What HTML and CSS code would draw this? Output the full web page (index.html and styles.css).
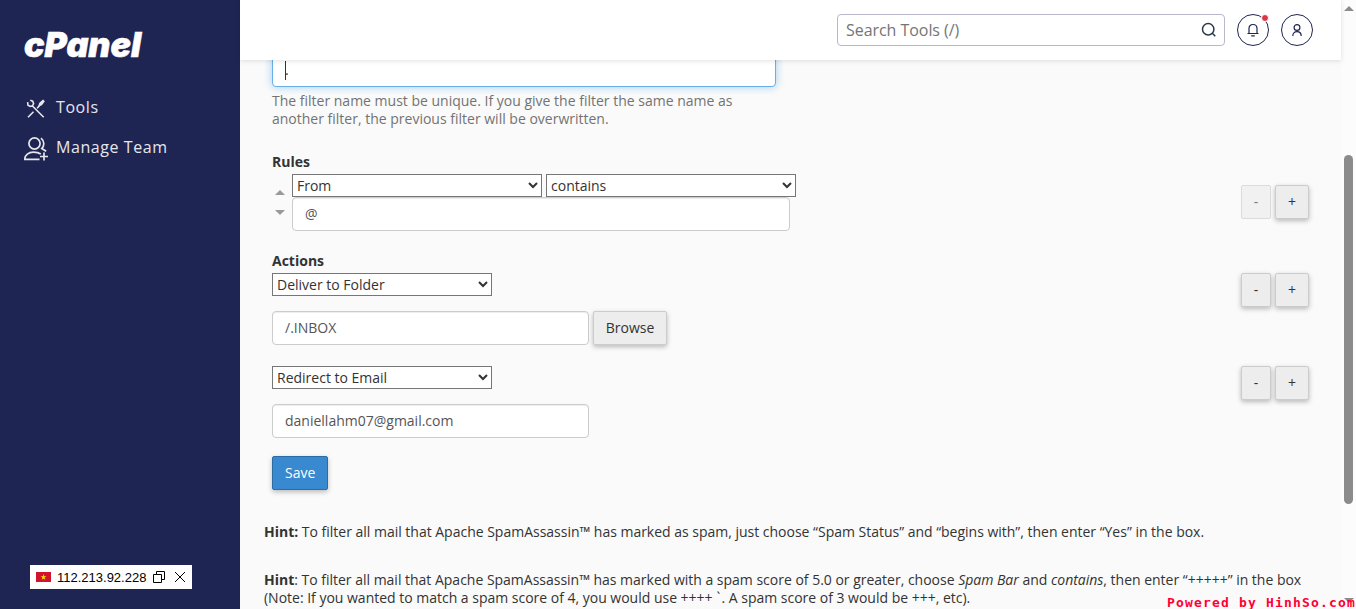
FILE: index.html
```
<!DOCTYPE html>
<html lang="en">
<head>
    <meta charset="UTF-8">
    <meta name="viewport" content="width=device-width, initial-scale=1.0">
    <title>cPanel - Email Filters</title>
    <link rel="stylesheet" href="styles.css">
</head>
<body>
    <div class="app">
        <nav class="sidebar">
            <svg class="logo" width="120" height="28" viewBox="0 0 120 28">
                <text x="0" y="26" textLength="117" lengthAdjust="spacingAndGlyphs">cPanel</text>
            </svg>
            <a class="nav-item">
                <svg width="24" height="24" viewBox="0 0 24 24" fill="none" stroke="#e6e6ea" stroke-width="1.600">
                    <path d="M3.600 5.200l.4 3 2.200 1.300 2.400-.8 1-2.300-.9-2.200-2.400-.9M8.200 8.700L19.700 20.300M4 20.300l5.500-5.500M13 11.200l2.500-2.500"/>
                    <path d="M15.200 8.500l.8-2.300 3-2.600.8.800-2.400 3.100z" fill="#e6e6ea"/>
                </svg>
                <span>Tools</span>
            </a>
            <a class="nav-item">
                <svg width="24" height="24" viewBox="0 0 24 24" fill="none" stroke="#e6e6ea" stroke-width="1.700">
                    <circle cx="10.500" cy="6.500" r="5.600"/>
                    <path d="M17 1.200c3.600 3 3.600 7.500.8 10.300l4.400 2.800M15.500 22.300H.8c0-4.500 4-7.100 8.500-7.100 3.500 0 6 .8 7.500 1.800M20 15.500v8M16 19.500h8"/>
                </svg>
                <span>Manage Team</span>
            </a>
            <div class="ip-box">
                <svg width="15" height="10" viewBox="0 0 15 10">
                    <rect width="15" height="10" fill="#d0142c"/>
                    <path d="M7.500 2l.7 2.200h2.300L8.600 5.500l.7 2.300-1.800-1.400-1.800 1.400.7-2.300-1.900-1.300h2.300z" fill="#ffde00"/>
                </svg>
                <span class="ip">112.213.92.228</span>
                <svg class="copy" width="12" height="12" viewBox="0 0 12 12" fill="none" stroke="#000">
                    <path d="M.5 3.500h8v8h-8zM3.500 3V.5h8v8H9"/>
                </svg>
                <svg width="12" height="12" viewBox="0 0 12 12" fill="none" stroke="#000">
                    <path d="M1 1l10 10M11 1L1 11"/>
                </svg>
            </div>
        </nav>

        <main class="main">
            <header class="header">
                <div class="search">
                    <input type="text" placeholder="Search Tools (/)">
                    <svg width="16" height="16" viewBox="0 0 16 16" fill="none" stroke="#293a4a" stroke-width="1.500">
                        <circle cx="7.200" cy="7.200" r="5.700"/>
                        <path d="M11.300 11.300l3 3"/>
                    </svg>
                </div>
                <button class="round">
                    <svg width="14" height="14" viewBox="0 0 14 14" fill="none" stroke="#1f2553" stroke-width="1.200">
                        <path d="M1.500 10.500h11M3 10.500V5.500C3 3 4.700 1.500 7 1.500s4 1.500 4 4v5M5.200 12.800h3.600"/>
                    </svg>
                    <span class="dot"></span>
                </button>
                <button class="round">
                    <svg width="14" height="14" viewBox="0 0 14 14" fill="none" stroke="#1f2553" stroke-width="1.200">
                        <circle cx="7" cy="4.500" r="2.900"/>
                        <path d="M2.800 13c0-2.800 1.600-4.300 4.200-4.300s4.200 1.500 4.200 4.300"/>
                    </svg>
                </button>
            </header>

            <div class="content">
                <form class="form">
                    <div class="filter-name"><span class="caret"></span>.</div>
                    <p class="help">The filter name must be unique. If you give the filter the same name as another filter, the previous filter will be overwritten.</p>

                    <label class="title">Rules</label>
                    <div class="row rule">
                        <div class="arrows">
                            <span class="up"></span>
                            <span class="down"></span>
                        </div>
                        <div class="fields">
                            <div class="selects">
                                <select class="wide"><option>From</option></select>
                                <select class="wide"><option>contains</option></select>
                            </div>
                            <input class="control rule-text" type="text" value="@">
                        </div>
                        <div class="buttons">
                            <button type="button" class="btn minus" disabled>-</button>
                            <button type="button" class="btn">+</button>
                        </div>
                    </div>

                    <label class="title actions-title">Actions</label>
                    <div class="row action">
                        <div class="fields">
                            <select><option>Deliver to Folder</option></select>
                            <div class="dest">
                                <input class="control" type="text" value="/.INBOX">
                                <button type="button" class="btn browse">Browse</button>
                            </div>
                        </div>
                        <div class="buttons">
                            <button type="button" class="btn minus">-</button>
                            <button type="button" class="btn">+</button>
                        </div>
                    </div>
                    <div class="row action">
                        <div class="fields">
                            <select><option>Redirect to Email</option></select>
                            <div class="dest">
                                <input class="control" type="text" value="daniellahm07@gmail.com">
                            </div>
                        </div>
                        <div class="buttons">
                            <button type="button" class="btn minus">-</button>
                            <button type="button" class="btn">+</button>
                        </div>
                    </div>

                    <button type="button" class="btn save">Save</button>
                </form>

                <p class="hint"><b>Hint:</b> To filter all mail that Apache SpamAssassin™ has marked as spam, just choose “Spam Status” and “begins with”, then enter “Yes” in the box.</p>
                <p class="hint"><b>Hint</b>: To filter all mail that Apache SpamAssassin™ has marked with a spam score of 5.0 or greater, choose <i>Spam Bar</i> and <i>contains</i>, then enter “+++++” in the box<br>(Note: If you wanted to match a spam score of 4, you would use ++++<span class="tick">`</span>. A spam score of 3 would be +++, etc).</p>
            </div>
        </main>

        <div class="scrollbar">
            <span class="up"></span>
            <div class="thumb"></div>
            <span class="down"></span>
        </div>
    </div>
    <div class="watermark">Powered by HinhSo.com</div>
</body>
</html>
```
FILE: styles.css
```
* { box-sizing: border-box; }
body { margin: 0; font-family: "Open Sans", sans-serif; font-size: 14px; line-height: 18px; color: #333; background-color: #fafafa; overflow: hidden; }
p { margin: 0; }
svg { display: block; flex: none; }
input, select, button { font-family: inherit; font-size: 14px; margin: 0; }

.app { display: flex; height: 609px; overflow: hidden; }

/* sidebar */
.sidebar { position: relative; width: 240px; padding: 31px 24px; background-color: #1f2553; flex: none; }
.logo { margin-bottom: 37px; overflow: visible; }
.logo text { font-family: Inter, sans-serif; font-weight: 900; font-style: italic; font-size: 34px; fill: #fff; stroke: #fff; stroke-width: 0.6px; }
.nav-item { display: flex; gap: 8px; height: 24px; margin-bottom: 16px; color: #e6e6ea; font-size: 16px; line-height: 22px; letter-spacing: 0.57px; }
.nav-item svg { margin-top: 1px; }
.ip-box { position: absolute; left: 30px; top: 565px; width: 162px; height: 24px; padding: 0 6px; display: flex; align-items: center; background-color: #fff; color: #000; font-family: "Liberation Sans", Arial, sans-serif; font-size: 13px; }
.ip { width: 89px; margin: 1px 7px 0 6px; }
.copy { margin-right: 9px; }

/* top bar */
.main { flex: 1; min-width: 0; }
.header { position: relative; z-index: 1; display: flex; align-items: center; justify-content: flex-end; gap: 12px; height: 60px; padding-right: 28px; background-color: #fff; box-shadow: 0 1px 5px rgba(0, 0, 0, 0.12); }
.search { display: flex; align-items: center; width: 388px; height: 32px; padding: 0 7px 0 8px; border: 1px solid #b9b8cb; border-radius: 4px; }
.search input { flex: 1; border: 0; padding: 0; font-size: 16px; letter-spacing: -0.05px; outline: none; }
.search input::placeholder { color: #757575; }
.round { position: relative; display: flex; align-items: center; justify-content: center; width: 32px; height: 32px; padding: 0; border: 1px solid #1f2553; border-radius: 50%; background-color: #fff; }
.dot { position: absolute; top: -1px; right: -1px; width: 8px; height: 8px; border: 1px solid #fff; border-radius: 50%; background-color: #dc3545; }

/* filter form */
.content { height: 549px; padding: 0 24px; overflow: hidden; }
.form { padding: 0 8px; }
.filter-name { display: flex; width: 504px; height: 34px; margin-top: -7px; padding: 7px 12px; border: 1px solid #66afe9; border-radius: 4px; background-color: #fff; box-shadow: 0 0 8px rgba(102, 175, 233, 0.6); }
.caret { width: 1px; height: 19px; margin-right: -1px; background-color: #333; }
.help { width: 490px; margin-top: 5px; color: #737373; }
.title { display: block; margin: 25px 0 3px; font-weight: 700; }
.actions-title { margin-top: 21px; }
.row { display: flex; }
.fields { flex: 1; }
select { display: block; width: 220px; height: 23px; color: #333; background-color: #fff; }
.selects { display: flex; gap: 4px; }
.wide { width: 250px; }
.control { display: block; width: 317px; height: 34px; padding: 5px 12px 7px; border: 1px solid #ccc; border-radius: 4px; color: #555; background-color: #fff; box-shadow: inset 0 1px 1px rgba(0, 0, 0, 0.075); }
.rule-text { width: 498px; }
.arrows { width: 20px; padding: 16px 0 0 2.500px; }
.up, .down { display: block; width: 0; border: 5px solid transparent; }
.up { border-top: 0; border-bottom-color: #999; }
.down { border-bottom: 0; border-top-color: #999; }
.arrows .down { margin-top: 15px; }
.buttons { display: flex; gap: 4px; }
.rule .buttons { margin-top: 11px; }
.btn { height: 34px; padding: 5px 12px 7px; border: 1px solid #ccc; border-radius: 2px; background-color: #ededed; color: #333; box-shadow: 0 2px 5px rgba(0, 0, 0, 0.26); }
.btn:disabled { opacity: 0.65; box-shadow: none; }
.buttons .btn { width: 34px; padding: 5px 0 7px; }
.buttons .minus { width: 30px; }
.browse { width: 74px; padding: 5px 0 7px; }
.action { margin-bottom: 21px; }
.dest { display: flex; gap: 4px; margin-top: 15px; }
.save { display: block; margin-top: -3px; border-color: #2d6ca2; background-color: #3889cf; color: #fff; }
.hint { margin-top: 30px; letter-spacing: -0.01px; white-space: nowrap; }
.form + .hint { margin-top: 33px; }
.tick { padding: 0 1px 0 4px; }

/* scrollbar */
.scrollbar { display: flex; flex-direction: column; align-items: center; width: 15px; padding: 6px 0; background-color: #fcfcfc; }
.scrollbar .up { border-bottom-color: #8b8b8b; }
.scrollbar .down { margin-top: auto; border-top-color: #8b8b8b; }
.thumb { width: 9px; height: 349px; margin-top: 144px; border-radius: 5px; background-color: #8b8b8b; }

.watermark { position: absolute; right: 0; bottom: -3px; color: #ff0033; font-family: "DejaVu Sans Mono", monospace; font-weight: 700; font-size: 13px; letter-spacing: 1.17px; white-space: pre; }
```
